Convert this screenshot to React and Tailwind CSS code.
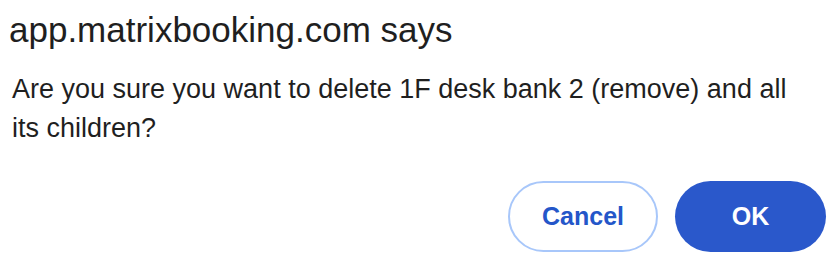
export default function App() {
  return (
    <div className="w-[835px] h-[262px] bg-white relative overflow-hidden" style={{ fontFamily: '"Liberation Sans", Arial, sans-serif' }}>
      <div className="pl-[9px] pt-[10px] text-[35px] leading-[40px] text-[#1f1f1f]">app.matrixbooking.com says</div>
      <div className="pl-[12px] pt-[20px] w-[805px] text-[27px] leading-[39px] text-[#1f1f1f]">
        Are you sure you want to delete 1F desk bank 2 (remove) and all its children?
      </div>
      <div className="absolute left-0 right-0 top-[181px] flex justify-end gap-[17px] pr-[9px]">
        <button className="w-[150px] h-[71px] rounded-full border-2 border-[#a8c7fa] bg-white text-[#2456c9] text-[25px] font-bold">Cancel</button>
        <button className="w-[151px] h-[71px] rounded-full bg-[#2a58cb] text-white text-[25px] font-bold">OK</button>
      </div>
    </div>
  );
}
